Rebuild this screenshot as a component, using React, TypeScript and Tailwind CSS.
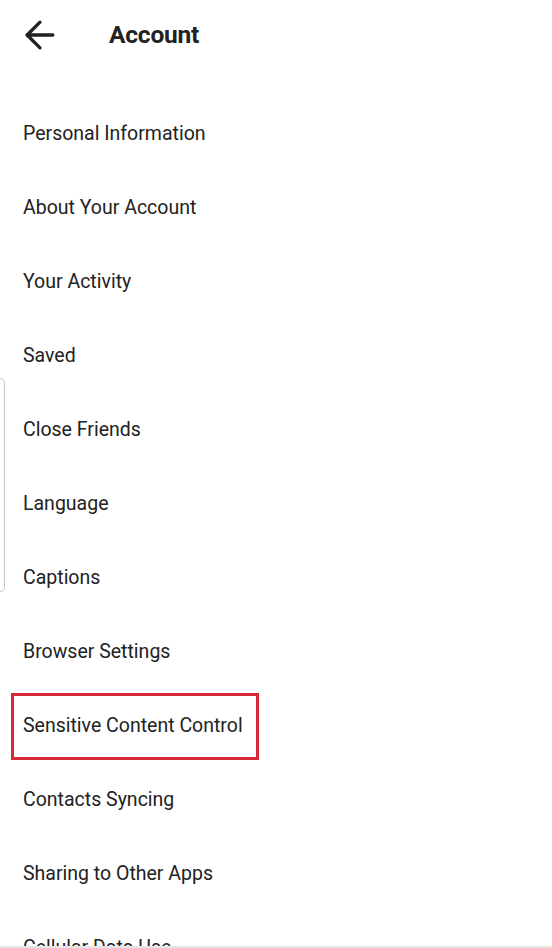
import { ArrowLeft } from "lucide-react";

const items = [
  "Personal Information",
  "About Your Account",
  "Your Activity",
  "Saved",
  "Close Friends",
  "Language",
  "Captions",
  "Browser Settings",
  "Sensitive Content Control",
  "Contacts Syncing",
  "Sharing to Other Apps",
  "Cellular Data Use",
];

const highlighted = "Sensitive Content Control";

export default function App() {
  return (
    <div
      className="relative h-[948px] w-[552px] overflow-hidden bg-white text-[#222222]"
      style={{ fontFamily: "Roboto, 'Noto Sans', sans-serif" }}
    >
      <div className="h-[946px] overflow-hidden">
        {/* Header */}
        <header className="flex h-[70px] items-center">
          <button className="ml-[18px] flex h-11 w-11 items-center justify-start text-[#222222]">
            <ArrowLeft className="h-[44px] w-[44px]" strokeWidth={1.8} />
          </button>
          <h1 className="ml-[47px] text-[24.5px] font-bold tracking-[-0.2px]">Account</h1>
        </header>

        {/* Settings list */}
        <ul className="pt-[26px]">
          {items.map((label) => (
            <li key={label} className="relative flex h-[74px] items-center pl-[23px] text-[19.5px] leading-none">
              <span className="pt-[2px]">{label}</span>
              {label === highlighted && (
                <span className="pointer-events-none absolute left-[11px] top-[5px] h-[67px] w-[248px] border-[3px] border-[#d7283a]" />
              )}
            </li>
          ))}
        </ul>
      </div>
      <div className="h-[2px] bg-[#e6e6e6]" />

      {/* Edge handle peeking in from the left */}
      <div className="absolute left-0 top-[378px] h-[214px] w-[5px] rounded-r-[5px] border border-l-0 border-[#c8c8c8]" />
    </div>
  );
}
